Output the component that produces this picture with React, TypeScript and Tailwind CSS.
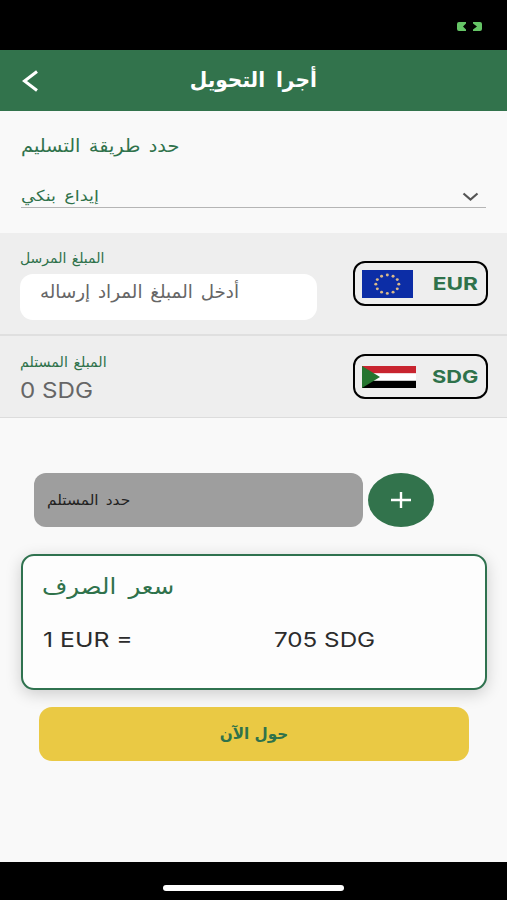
import type { ReactNode } from "react";

const arabic = "font-['DejaVu_Sans',sans-serif]";
const latin = "font-[Inter,sans-serif]";

function Label({ className, children }: { className: string; children: ReactNode }) {
  return <span className={`block w-fit whitespace-nowrap leading-none ${className}`}>{children}</span>;
}

function EuFlag() {
  const stars = Array.from({ length: 12 }, (_, i) => {
    const a = (i * Math.PI) / 6;
    return { x: 25.3 + 11.5 * Math.sin(a), y: 14.2 - 9.2 * Math.cos(a) };
  });
  return (
    <svg className="ml-[7px] h-[28px] w-[51px]" viewBox="0 0 51 28">
      <rect width="51" height="28" fill="#0c2da6" />
      {stars.map((s, i) => (
        <ellipse key={i} cx={s.x} cy={s.y} rx="1.5" ry="1.4" fill="#d9b98a" />
      ))}
    </svg>
  );
}

function SudanFlag() {
  return (
    <svg className="ml-[7px] h-[22px] w-[54px]" viewBox="0 0 54 22">
      <rect width="54" height="7.4" fill="#c8242f" />
      <rect y="7.4" width="54" height="7.4" fill="#fff" />
      <rect y="14.8" width="54" height="7.2" fill="#000" />
      <path d="M0 0L18 11L0 22Z" fill="#25752f" />
    </svg>
  );
}

export default function App() {
  return (
    <div className="flex h-[900px] w-[507px] flex-col overflow-hidden bg-[#f9f9f9] text-[#2f724b]">
      <div className="flex h-[50px] shrink-0 justify-end bg-black pt-[22px] pr-[25px]">
        <svg className="h-[9px] w-[25px]" viewBox="0 0 25 9" fill="#65c466">
          <path d="M2 0H9V1.5L6 4.5L9 7.5V9H2Q0 9 0 7V2Q0 0 2 0Z" />
          <path d="M16 0H23Q25 0 25 2V7Q25 9 23 9H16V7.5L20 4.5L16 1.5Z" />
        </svg>
      </div>

      <header className="grid h-[61px] shrink-0 grid-cols-[60px_1fr_60px] items-center bg-[#32734c] text-white">
        <svg className="ml-[22px] h-[22px] w-[17px]" viewBox="0 0 17 22" fill="none" stroke="currentColor" strokeWidth="3">
          <path d="M15 1.5L2.5 11L15 20.5" />
        </svg>
        <Label className={`mx-auto scale-x-[0.96] text-[21px] font-bold [word-spacing:4px] ${arabic}`}>أجرا التحويل</Label>
      </header>

      <section className="h-[122px] shrink-0 px-[21px] pt-[26px]">
        <Label className={`origin-left scale-x-[1.075] text-[18px] [word-spacing:2px] ${arabic}`}>حدد طريقة التسليم</Label>
        <div className="mt-[26px] flex h-[27px] justify-between border-b-[1.5px] border-[#b5b5b5] pt-[8px]">
          <Label className={`origin-left scale-x-[1.19] text-[15px] [word-spacing:2px] ${arabic}`}>إيداع بنكي</Label>
          <svg className="mt-[3px] mr-[7px] h-[10px] w-[17px]" viewBox="0 0 17 10" fill="none" stroke="#555" strokeWidth="2.2">
            <path d="M1.5 1.5L8.5 7.5L15.5 1.5" />
          </svg>
        </div>
      </section>

      <section className="flex h-[103px] shrink-0 justify-between border-b-2 border-[#dfdfdf] bg-[#eeeeee] pr-[19px] pl-[20px]">
        <div className="pt-[18px]">
          <Label className={`text-[14px] [word-spacing:1px] ${arabic}`}>المبلغ المرسل</Label>
          <div className="mt-[9px] h-[46px] w-[297px] rounded-[13px] bg-white pt-[9px] pl-[20px] text-[#666]">
            <Label className={`origin-left scale-x-[1.015] text-[18px] [word-spacing:2px] ${arabic}`}>أدخل المبلغ المراد إرساله</Label>
          </div>
        </div>
        <div className="mt-[28px] flex h-[45px] w-[135px] items-center justify-between rounded-[12px] border-[2.4px] border-black pr-[8px]">
          <EuFlag />
          <Label className={`origin-right scale-x-[1.26] text-[18px] font-bold ${latin}`}>EUR</Label>
        </div>
      </section>

      <section className="flex h-[82px] shrink-0 justify-between border-b border-[#dcdcdc] bg-[#eeeeee] pr-[19px] pl-[20px]">
        <div className="pt-[19px]">
          <Label className={`origin-left scale-x-[1.02] text-[14px] [word-spacing:1px] ${arabic}`}>المبلغ المستلم</Label>
          <Label className={`mt-[11px] origin-left scale-x-[1.15] text-[21px] text-[#666] ${latin}`}>0 SDG</Label>
        </div>
        <div className="mt-[18px] flex h-[45px] w-[135px] items-center justify-between rounded-[12px] border-[2.4px] border-black pr-[8px]">
          <SudanFlag />
          <Label className={`origin-right scale-x-[1.21] text-[18px] font-bold ${latin}`}>SDG</Label>
        </div>
      </section>

      <div className="mt-[55px] ml-[34px] flex h-[54px] shrink-0 gap-[5px]">
        <div className="flex w-[329px] items-center rounded-[12px] bg-[#9e9e9e] pl-[13px] text-[#222]">
          <Label className={`origin-left scale-x-[1.1] text-[14px] [word-spacing:2px] ${arabic}`}>حدد المستلم</Label>
        </div>
        <button className="flex w-[66px] items-center justify-center rounded-[50%] bg-[#32734c]">
          <svg className="h-[16px] w-[20px]" viewBox="0 0 20 16" stroke="#fff" strokeWidth="2.4">
            <path d="M0 8H20M10 0V16" />
          </svg>
        </button>
      </div>

      <section className="mt-[27px] ml-[21px] h-[136px] w-[466px] shrink-0 rounded-[13px] border-[2.5px] border-[#2f724f] bg-[#fdfdfd] px-[19px] pt-[20px] shadow-[0_4px_16px_rgba(0,0,0,0.18)]">
        <Label className={`origin-left scale-x-[1.11] text-[22px] [word-spacing:4px] ${arabic}`}>سعر الصرف</Label>
        <div className="mt-[32px] grid grid-cols-[231px_1fr] pl-[1px] text-[#2c2c2c]">
          <Label className={`origin-left scale-x-[1.24] text-[20px] ${latin}`}>1 EUR =</Label>
          <Label className={`origin-left scale-x-[1.21] text-[20px] ${latin}`}>705 SDG</Label>
        </div>
      </section>

      <button className="mt-[17px] ml-[39px] flex h-[54px] w-[430px] shrink-0 items-center justify-center rounded-[13px] bg-[#eac944]">
        <Label className={`scale-x-[0.95] text-[16px] font-bold ${arabic}`}>حول الآن</Label>
      </button>

      <footer className="mt-auto flex h-[38px] shrink-0 justify-center bg-black pt-[23px]">
        <div className="h-[6px] w-[181px] rounded-full bg-white" />
      </footer>
    </div>
  );
}
